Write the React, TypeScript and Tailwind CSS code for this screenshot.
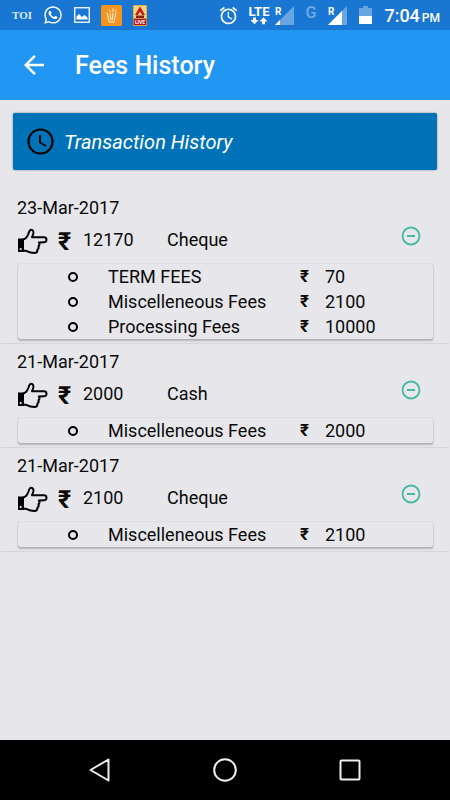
import { FaWhatsapp } from "react-icons/fa";
import { MdAlarm, MdArrowBack } from "react-icons/md";

type Fee = { name: string; amount: number };

type Transaction = {
  id: number;
  date: string;
  total: number;
  mode: string;
  fees: Fee[];
};

const transactions: Transaction[] = [
  {
    id: 1,
    date: "23-Mar-2017",
    total: 12170,
    mode: "Cheque",
    fees: [
      { name: "TERM FEES", amount: 70 },
      { name: "Miscelleneous Fees", amount: 2100 },
      { name: "Processing Fees", amount: 10000 },
    ],
  },
  {
    id: 2,
    date: "21-Mar-2017",
    total: 2000,
    mode: "Cash",
    fees: [{ name: "Miscelleneous Fees", amount: 2000 }],
  },
  {
    id: 3,
    date: "21-Mar-2017",
    total: 2100,
    mode: "Cheque",
    fees: [{ name: "Miscelleneous Fees", amount: 2100 }],
  },
];

function PictureIcon() {
  return (
    <svg width="16" height="16" viewBox="0 0 16 16" fill="none">
      <rect x="0.75" y="0.75" width="14.5" height="14.5" stroke="#fff" strokeWidth="1.3" />
      <path d="M2.5 12.5V9.5L5 7l3 3 2.5-2 3 2.5v2z" fill="#fff" />
    </svg>
  );
}

function BinIcon() {
  return (
    <svg width="21" height="21" viewBox="0 0 21 21" fill="none">
      <rect width="21" height="21" rx="1.5" fill="#f7941e" />
      <path
        d="M6 7.500l2 9.500h5l2-9.500M9 8l.8 7M12 8l-.8 7M8 4.500l1.500 2.500M12 3.500v3.500M15.500 4.500l-1.500 2"
        stroke="#fff"
        strokeWidth="0.9"
      />
    </svg>
  );
}

function LiveNewsIcon() {
  return (
    <svg width="14" height="21" viewBox="0 0 14 21">
      <rect width="14" height="21" rx="1" fill="#d9a637" />
      <rect x="0.7" y="0.7" width="12.6" height="13" fill="#f3d27a" />
      <path d="M7 1.5L12 10H9.3L7 6.5 4.7 10H2z" fill="#c3161c" />
      <rect x="3" y="10.5" width="8" height="2.5" fill="#8c1d18" />
      <rect x="0.7" y="13.7" width="12.6" height="6.3" fill="#b5121b" />
      <text
        x="7"
        y="18.7"
        textAnchor="middle"
        fontSize="5"
        fontWeight="700"
        fontFamily="Roboto, sans-serif"
        fill="#fff"
      >
        LIVE
      </text>
    </svg>
  );
}

function LteIcon() {
  return (
    <svg width="24" height="20" viewBox="0 0 24 20" fill="#fff">
      <text
        x="12"
        y="10.5"
        textAnchor="middle"
        fontSize="13"
        fontWeight="700"
        fontFamily="Roboto, sans-serif"
      >
        LTE
      </text>
      <path d="M6 12.500h3V15h2.500l-4 4.200-4-4.200H6zM15 19.200h3v-2.700h2.500l-4-4.200-4 4.200H15z" />
    </svg>
  );
}

function SignalIcon({ level }: { level: number }) {
  return (
    <svg width="19" height="19" viewBox="0 0 19 19">
      <path d="M19 0v19H0z" fill="#fff" fillOpacity="0.35" />
      <path d={`M${level} ${19 - level}V19H0z`} fill="#fff" />
      <text
        x="0"
        y="9"
        fontSize="10"
        fontWeight="700"
        fontFamily="Roboto, sans-serif"
        fill="#fff"
      >
        R
      </text>
    </svg>
  );
}

function BatteryIcon() {
  return (
    <svg width="13" height="18" viewBox="0 0 13 18">
      <path d="M4 0h5v2h4v16H0V2h4z" fill="#fff" fillOpacity="0.35" />
      <path d="M0 10h13v8H0z" fill="#fff" />
    </svg>
  );
}

function ClockIcon() {
  return (
    <svg width="27" height="27" viewBox="0 0 27 27" fill="none" stroke="#000">
      <circle cx="13.5" cy="13.5" r="12" strokeWidth="2.2" />
      <path d="M13 7v7.500l6 3.500" strokeWidth="1.8" />
    </svg>
  );
}

function HandIcon() {
  return (
    <svg width="31" height="27" viewBox="0 0 31 27" fill="none">
      <path
        d="M6 11.500C9 11 10.500 8.500 11.500 5.500C12.200 3 12.800 1.700 14.200 1.700C16.200 1.700 16.800 4 16.200 6L15 9.300H27C30.300 9.300 30.300 14.200 27 14.300L21.800 14.500C23 16 22.500 17.600 21.500 18.200C22 20 21.300 21 20.500 21.500C20.500 24 19.500 25 17.500 25C14 25 11.500 24 9 22.800H6"
        stroke="#000"
        strokeWidth="2"
        strokeLinejoin="round"
      />
      <path d="M1 10.500H7V24H1z" fill="#000" />
      <circle cx="3.700" cy="21" r="1.100" fill="#e7e6eb" />
    </svg>
  );
}

function StatusBar() {
  return (
    <div className="flex h-[30px] items-center justify-between bg-[#1976d2] pr-2.5 pl-3 text-white">
      <div className="flex items-center gap-[11px]">
        <span className="w-[20px] font-['Liberation_Serif',serif] text-[11px] font-bold text-[#dbe9f8]">
          TOI
        </span>
        <FaWhatsapp size={20} />
        <PictureIcon />
        <BinIcon />
        <LiveNewsIcon />
      </div>
      <div className="flex items-center">
        <MdAlarm size={21} className="mr-2" />
        <LteIcon />
        <span className="ml-1">
          <SignalIcon level={5} />
        </span>
        <span className="mx-3 self-start text-[16px] leading-[22px] font-medium text-white/40">
          G
        </span>
        <SignalIcon level={14} />
        <span className="mx-3">
          <BatteryIcon />
        </span>
        <div className="flex items-baseline gap-0.5 font-medium">
          <span className="text-[18px]">7:04</span>
          <span className="text-[12px]">PM</span>
        </div>
      </div>
    </div>
  );
}

function FeeRow({ fee }: { fee: Fee }) {
  return (
    <li className="flex h-[25px] items-center pl-[50px]">
      <span className="mr-[30px] size-[10px] rounded-full border-2 border-black" />
      <span className="w-[192px]">{fee.name}</span>
      <span className="w-[25px] text-[17px] font-bold">₹</span>
      <span>{fee.amount}</span>
    </li>
  );
}

function TransactionCard({ transaction }: { transaction: Transaction }) {
  return (
    <li className="rounded-[3px] border-b border-[#d5d4d9] px-[17px] pt-1.5 pb-1">
      <p className="leading-6">{transaction.date}</p>
      <div className="mb-1.5 flex h-[38px] items-center">
        <span className="pt-1">
          <HandIcon />
        </span>
        <span className="ml-2.5 w-[25px] pt-1 text-[25px] leading-none font-bold">₹</span>
        <span className="w-[84px]">{transaction.total}</span>
        <span className="flex-1">{transaction.mode}</span>
        <button type="button" aria-label="Collapse" className="mr-3 pb-1.5">
          <svg width="20" height="20" viewBox="0 0 20 20" fill="none" stroke="#45b8a0">
            <circle cx="10" cy="10" r="8.500" strokeWidth="1.800" />
            <path d="M6 10h8" strokeWidth="2" />
          </svg>
        </button>
      </div>
      <ul className="ml-px rounded-[2px] shadow-[0_0_1px_rgba(0,0,0,0.35),0_2px_2px_rgba(0,0,0,0.22)]">
        {transaction.fees.map((fee) => (
          <FeeRow key={fee.name} fee={fee} />
        ))}
      </ul>
    </li>
  );
}

function NavBar() {
  return (
    <nav className="flex h-[60px] items-center justify-center gap-[101px] bg-black">
      <button type="button" aria-label="Back">
        <svg width="24" height="24" viewBox="0 0 24 24" fill="none" stroke="#eee" strokeWidth="2">
          <path d="M20.500 1.500v21L2.500 12z" strokeLinejoin="round" />
        </svg>
      </button>
      <button type="button" aria-label="Home">
        <svg width="24" height="24" viewBox="0 0 24 24" fill="none" stroke="#eee" strokeWidth="2">
          <circle cx="12" cy="12" r="10.800" />
        </svg>
      </button>
      <button type="button" aria-label="Recent apps">
        <svg width="24" height="24" viewBox="0 0 24 24" fill="none" stroke="#eee" strokeWidth="2">
          <rect x="2.500" y="2.500" width="19" height="19" rx="1" />
        </svg>
      </button>
    </nav>
  );
}

export default function App() {
  return (
    <div className="flex min-h-screen flex-col bg-[#e7e6eb] font-[Roboto,sans-serif] text-[18px] text-[#0a0a0a]">
      <StatusBar />
      <header className="flex h-[70px] items-center gap-[26px] bg-[#2196f3] px-[19px] text-white">
        <button type="button" aria-label="Go back">
          <MdArrowBack size={30} />
        </button>
        <h1 className="pt-0.5 text-[25px] font-medium">Fees History</h1>
      </header>

      <main className="flex-1">
        <div className="mx-[13px] mt-[13px] mb-5 flex h-[57px] items-center gap-2.5 rounded-[2px] bg-[#0072b8] px-3.5 shadow-[0_0_2px_rgba(0,0,0,0.5)]">
          <ClockIcon />
          <h2 className="text-[20px] text-white italic">Transaction History</h2>
        </div>
        <ul>
          {transactions.map((transaction) => (
            <TransactionCard key={transaction.id} transaction={transaction} />
          ))}
        </ul>
      </main>

      <NavBar />
    </div>
  );
}
